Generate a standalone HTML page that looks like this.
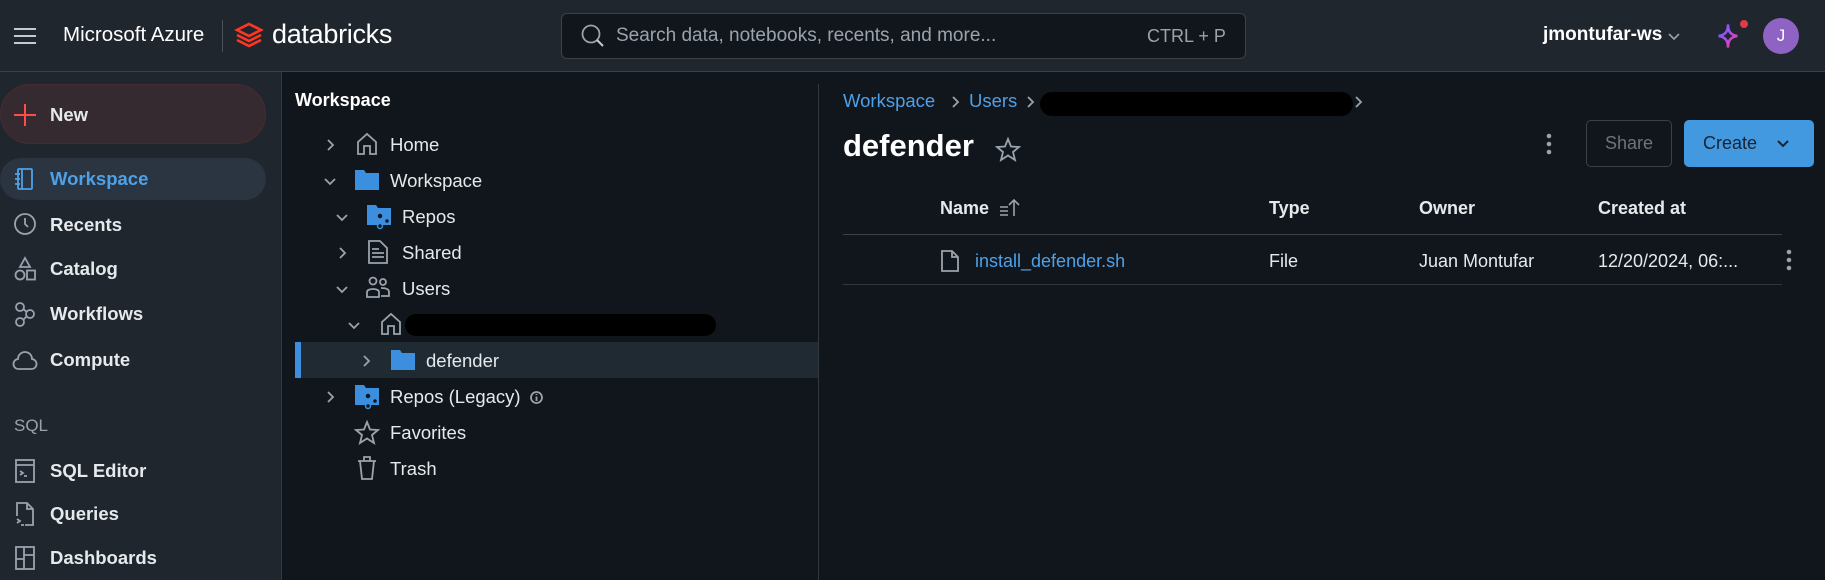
<!DOCTYPE html>
<html><head><meta charset="utf-8"><style>
*{box-sizing:border-box;margin:0;padding:0}
body{width:1825px;height:580px;overflow:hidden;background:#11161c;font-family:"Liberation Sans",sans-serif;color:#e6e9ec;position:relative}
.a{position:absolute;white-space:nowrap}
#top{left:0;top:0;width:1825px;height:72px;background:#1f262e;border-bottom:1px solid #3a4148}
#nav{left:0;top:72px;width:282px;height:508px;background:#1f262e;border-right:1px solid #30373e}
.ni{font-size:18.5px;font-weight:bold;color:#e6e9ec}
.tr{font-size:18.5px;color:#e6e9ec}
svg{position:absolute;overflow:visible}
.g{stroke:#9aa3ad;fill:none;stroke-width:1.8}
.th{font-size:18px;font-weight:bold}
.td{font-size:18px}
</style></head><body>
<div class="a" id="top"></div>
<svg style="left:14px;top:27px" width="22" height="18"><path d="M0 2H22M0 9H22M0 16H22" stroke="#c4cad0" stroke-width="2"/></svg>
<div class="a" style="left:63px;top:23px;font-size:20.5px;color:#fff">Microsoft Azure</div>
<div class="a" style="left:222px;top:20px;width:1px;height:32px;background:#4a525a"></div>
<svg style="left:236px;top:23px" width="26" height="26" viewBox="0 0 26 26"><path d="M13 1L25 7L13 13L1 7Z M1 12L13 18L25 12 M1 17L13 23L25 17" fill="none" stroke="#ff3621" stroke-width="2.6"/></svg>
<div class="a" style="left:272px;top:19px;font-size:27px;color:#fff;letter-spacing:-0.3px">databricks</div>
<div class="a" style="left:561px;top:13px;width:685px;height:46px;background:#11161c;border:1px solid #3a4148;border-radius:6px"></div>
<svg style="left:581px;top:24px" width="24" height="24"><circle cx="10" cy="10" r="8.5" class="g" stroke="#c4cad0"/><path d="M16 16L22 22" stroke="#c4cad0" stroke-width="2"/></svg>
<div class="a" style="left:616px;top:25px;font-size:19px;color:#9aa3ad">Search data, notebooks, recents, and more...</div>
<div class="a" style="left:1147px;top:26px;font-size:18px;color:#9aa3ad">CTRL + P</div>
<div class="a" style="left:1543px;top:24px;font-size:19px;font-weight:bold;color:#fff">jmontufar-ws</div>
<svg style="left:1668px;top:33px" width="12" height="8"><path d="M1 1L6 6L11 1" stroke="#9aa3ad" stroke-width="1.6" fill="none"/></svg>
<svg style="left:1714px;top:22px" width="28" height="28" viewBox="0 0 24 24"><defs><linearGradient id="sg" x1="0" y1="0" x2="1" y2="1"><stop offset="0" stop-color="#4f6bff"/><stop offset=".5" stop-color="#b04cf0"/><stop offset="1" stop-color="#ff3f6c"/></linearGradient></defs><path d="M12 2C12 8 14 11 20 12C14 13 12 16 12 22C12 16 10 13 4 12C10 11 12 8 12 2Z" fill="none" stroke="url(#sg)" stroke-width="2.2"/></svg>
<div class="a" style="left:1740px;top:20px;width:8px;height:8px;border-radius:50%;background:#e03a45"></div>
<div class="a" style="left:1763px;top:18px;width:36px;height:36px;border-radius:50%;background:#8e63c4;color:#fff;font-size:17px;text-align:center;line-height:36px">J</div>

<div class="a" id="nav"></div>
<div class="a" style="left:0;top:84px;width:266px;height:60px;background:#352a2f;border:1px solid #4a2a30;border-radius:30px"></div>
<svg style="left:14px;top:104px" width="22" height="22"><path d="M11 0V22M0 11H22" stroke="#ff4b4b" stroke-width="2"/></svg>
<div class="a ni" style="left:50px;top:104px">New</div>
<div class="a" style="left:0;top:158px;width:266px;height:42px;background:#2a3541;border-radius:21px"></div>
<svg style="left:15px;top:168px" width="20" height="22"><rect x="3" y="1" width="14" height="20" rx="1" stroke="#4ea1e8" stroke-width="1.8" fill="none"/><path d="M7 1V21M0 6H5M0 11H5M0 16H5" stroke="#4ea1e8" stroke-width="1.8"/></svg>
<div class="a ni" style="left:50px;top:168px;color:#4ea1e8">Workspace</div>
<svg style="left:14px;top:213px" width="22" height="22"><circle cx="11" cy="11" r="10" class="g"/><path d="M11 5V11L14 14" class="g"/></svg>
<div class="a ni" style="left:50px;top:214px">Recents</div>
<svg style="left:14px;top:257px" width="22" height="24"><path d="M11 1L16 10H6Z" class="g"/><circle cx="6" cy="18" r="4.5" class="g"/><rect x="13" y="13.5" width="8" height="9" class="g"/></svg>
<div class="a ni" style="left:50px;top:258px">Catalog</div>
<svg style="left:14px;top:302px" width="22" height="24"><circle cx="6" cy="5" r="4" class="g"/><circle cx="16" cy="12" r="4" class="g"/><circle cx="6" cy="20" r="4" class="g"/><path d="M9 7L13 10M13 14L9 18" class="g"/></svg>
<div class="a ni" style="left:50px;top:303px">Workflows</div>
<svg style="left:13px;top:349px" width="24" height="22"><path d="M6 20H18A5 5 0 0 0 19 10A7 7 0 0 0 5 10A5 5 0 0 0 6 20Z" class="g"/></svg>
<div class="a ni" style="left:50px;top:349px">Compute</div>
<div class="a" style="left:14px;top:416px;font-size:17px;color:#9aa3ad">SQL</div>
<svg style="left:15px;top:459px" width="20" height="24"><rect x="1" y="1" width="18" height="22" class="g"/><path d="M1 6H19M5 12L8 14L5 16M9 17H12" class="g"/></svg>
<div class="a ni" style="left:50px;top:460px">SQL Editor</div>
<svg style="left:15px;top:502px" width="20" height="24"><path d="M2 14V1H12L18 7V23H10M12 1V7H18M2 17L5 19L2 21M6 23H9" class="g"/></svg>
<div class="a ni" style="left:50px;top:503px">Queries</div>
<svg style="left:15px;top:546px" width="20" height="24"><rect x="1" y="1" width="18" height="22" class="g"/><path d="M9 1V23M1 13H9M9 9H19" class="g"/></svg>
<div class="a ni" style="left:50px;top:547px">Dashboards</div>

<div class="a" style="left:818px;top:84px;width:1px;height:496px;background:#30373e"></div>
<div class="a" style="left:295px;top:90px;font-size:18px;font-weight:bold;color:#fff">Workspace</div>
<div class="a" style="left:295px;top:342px;width:523px;height:36px;background:#1f2a33"></div>
<div class="a" style="left:295px;top:342px;width:6px;height:36px;background:#3b8fde"></div>
<svg style="left:326px;top:139px" width="10" height="12"><path d="M2 1L7 6L2 11" class="g" stroke-width="1.6"/></svg>
<svg style="left:324px;top:177px" width="12" height="10"><path d="M1 2L6 7L11 2" class="g" stroke-width="1.6"/></svg>
<svg style="left:336px;top:213px" width="12" height="10"><path d="M1 2L6 7L11 2" class="g" stroke-width="1.6"/></svg>
<svg style="left:338px;top:247px" width="10" height="12"><path d="M2 1L7 6L2 11" class="g" stroke-width="1.6"/></svg>
<svg style="left:336px;top:285px" width="12" height="10"><path d="M1 2L6 7L11 2" class="g" stroke-width="1.6"/></svg>
<svg style="left:348px;top:321px" width="12" height="10"><path d="M1 2L6 7L11 2" class="g" stroke-width="1.6"/></svg>
<svg style="left:362px;top:355px" width="10" height="12"><path d="M2 1L7 6L2 11" class="g" stroke-width="1.6"/></svg>
<svg style="left:326px;top:391px" width="10" height="12"><path d="M2 1L7 6L2 11" class="g" stroke-width="1.6"/></svg>
<svg style="left:356px;top:133px" width="22" height="22"><path d="M2 21V9L11 1L20 9V21H14V13H8V21Z" class="g"/></svg>
<svg style="left:355px;top:170px" width="24" height="20"><path d="M0 0H9L11 3H24V20H0Z" fill="#3b8fde"/></svg>
<svg style="left:367px;top:205px" width="24" height="24"><path d="M0 0H9L11 3H24V20H0Z" fill="#3b8fde"/><circle cx="13" cy="11" r="3" fill="#11161c" stroke="#3b8fde" stroke-width="1.5"/><circle cx="13" cy="21" r="2.5" fill="#11161c" stroke="#3b8fde" stroke-width="1.5"/><circle cx="20" cy="16" r="2.5" fill="#11161c" stroke="#3b8fde" stroke-width="1.5"/></svg>
<svg style="left:368px;top:240px" width="20" height="24"><path d="M1 1H12L19 8V23H1Z M4 9H11M4 13H16M4 17H16" class="g"/></svg>
<svg style="left:366px;top:277px" width="24" height="22"><circle cx="7" cy="4" r="3.5" class="g"/><circle cx="17" cy="5" r="3" class="g"/><path d="M1 20V15C1 11 13 11 13 15V20ZM15 11C20 11 23 12 23 15V19H15" class="g"/></svg>
<svg style="left:380px;top:313px" width="22" height="22"><path d="M2 21V9L11 1L20 9V21H14V13H8V21Z" class="g"/></svg>
<div class="a" style="left:405px;top:314px;width:311px;height:22px;background:#000;border-radius:11px"></div>
<svg style="left:391px;top:350px" width="24" height="20"><path d="M0 0H9L11 3H24V20H0Z" fill="#3b8fde"/></svg>
<svg style="left:355px;top:385px" width="24" height="24"><path d="M0 0H9L11 3H24V20H0Z" fill="#3b8fde"/><circle cx="13" cy="11" r="3" fill="#11161c" stroke="#3b8fde" stroke-width="1.5"/><circle cx="13" cy="21" r="2.5" fill="#11161c" stroke="#3b8fde" stroke-width="1.5"/><circle cx="20" cy="16" r="2.5" fill="#11161c" stroke="#3b8fde" stroke-width="1.5"/></svg>
<svg style="left:355px;top:421px" width="24" height="24"><path d="M12 1L15 8.5L23 9L17 14L19 22L12 17.5L5 22L7 14L1 9L9 8.5Z" class="g"/></svg>
<svg style="left:357px;top:456px" width="20" height="24"><path d="M1 5H19M7 5V1H13V5M3 5L5 23H15L17 5" class="g"/></svg>
<div class="a tr" style="left:390px;top:134px">Home</div>
<div class="a tr" style="left:390px;top:170px">Workspace</div>
<div class="a tr" style="left:402px;top:206px">Repos</div>
<div class="a tr" style="left:402px;top:242px">Shared</div>
<div class="a tr" style="left:402px;top:278px">Users</div>
<div class="a tr" style="left:426px;top:350px">defender</div>
<div class="a tr" style="left:390px;top:386px">Repos (Legacy)</div>
<svg style="left:530px;top:391px" width="13" height="13"><circle cx="6.5" cy="6.5" r="5.5" class="g" stroke-width="1.3"/><path d="M6.5 5.5V10M6.5 3V4" class="g" stroke-width="1.3"/></svg>
<div class="a tr" style="left:390px;top:422px">Favorites</div>
<div class="a tr" style="left:390px;top:458px">Trash</div>

<div class="a" style="left:843px;top:90px;font-size:18.5px;color:#4ea1e8">Workspace</div>
<svg style="left:952px;top:96px" width="8" height="12"><path d="M1 1L6 6L1 11" class="g" stroke-width="1.5"/></svg>
<div class="a" style="left:969px;top:90px;font-size:18.5px;color:#4ea1e8">Users</div>
<svg style="left:1027px;top:96px" width="8" height="12"><path d="M1 1L6 6L1 11" class="g" stroke-width="1.5"/></svg>
<div class="a" style="left:1040px;top:92px;width:313px;height:24px;background:#000;border-radius:12px"></div>
<svg style="left:1355px;top:96px" width="8" height="12"><path d="M1 1L6 6L1 11" class="g" stroke-width="1.5"/></svg>
<div class="a" style="left:843px;top:128px;font-size:31px;font-weight:bold;color:#fff">defender</div>
<svg style="left:996px;top:138px" width="24" height="24"><path d="M12 1L15 8.5L23 9L17 14L19 22L12 17.5L5 22L7 14L1 9L9 8.5Z" class="g"/></svg>
<svg style="left:1545px;top:133px" width="8" height="24"><circle cx="4" cy="3" r="2.3" fill="#9aa3ad"/><circle cx="4" cy="11" r="2.3" fill="#9aa3ad"/><circle cx="4" cy="19" r="2.3" fill="#9aa3ad"/></svg>
<div class="a" style="left:1586px;top:120px;width:86px;height:47px;border:1px solid #3a4148;border-radius:5px;color:#6b7580;font-size:18px;text-align:center;line-height:45px">Share</div>
<div class="a" style="left:1684px;top:120px;width:130px;height:47px;background:#4299e0;border-radius:5px;color:#1a2330;font-size:18px;line-height:47px;padding-left:19px">Create</div>
<svg style="left:1777px;top:140px" width="12" height="8"><path d="M1 1L6 6L11 1" stroke="#1a2330" stroke-width="2" fill="none"/></svg>
<div class="a th" style="left:940px;top:198px">Name</div>
<svg style="left:999px;top:198px" width="22" height="20"><path d="M1 9H9M1 13H9M1 17H9M15 18V2M10 7L15 2L20 7" stroke="#9aa3ad" stroke-width="1.6" fill="none"/></svg>
<div class="a th" style="left:1269px;top:198px">Type</div>
<div class="a th" style="left:1419px;top:198px">Owner</div>
<div class="a th" style="left:1598px;top:198px">Created at</div>
<div class="a" style="left:843px;top:234px;width:939px;height:1px;background:#3a4148"></div>
<svg style="left:941px;top:250px" width="18" height="22"><path d="M1 1H11L17 7V21H1Z M11 1V7H17" class="g"/></svg>
<div class="a td" style="left:975px;top:251px;color:#4ea1e8">install_defender.sh</div>
<div class="a td" style="left:1269px;top:251px">File</div>
<div class="a td" style="left:1419px;top:251px">Juan Montufar</div>
<div class="a td" style="left:1598px;top:251px">12/20/2024, 06:...</div>
<svg style="left:1785px;top:249px" width="8" height="24"><circle cx="4" cy="3" r="2.3" fill="#9aa3ad"/><circle cx="4" cy="11" r="2.3" fill="#9aa3ad"/><circle cx="4" cy="19" r="2.3" fill="#9aa3ad"/></svg>
<div class="a" style="left:843px;top:284px;width:939px;height:1px;background:#30373e"></div>
</body></html>
